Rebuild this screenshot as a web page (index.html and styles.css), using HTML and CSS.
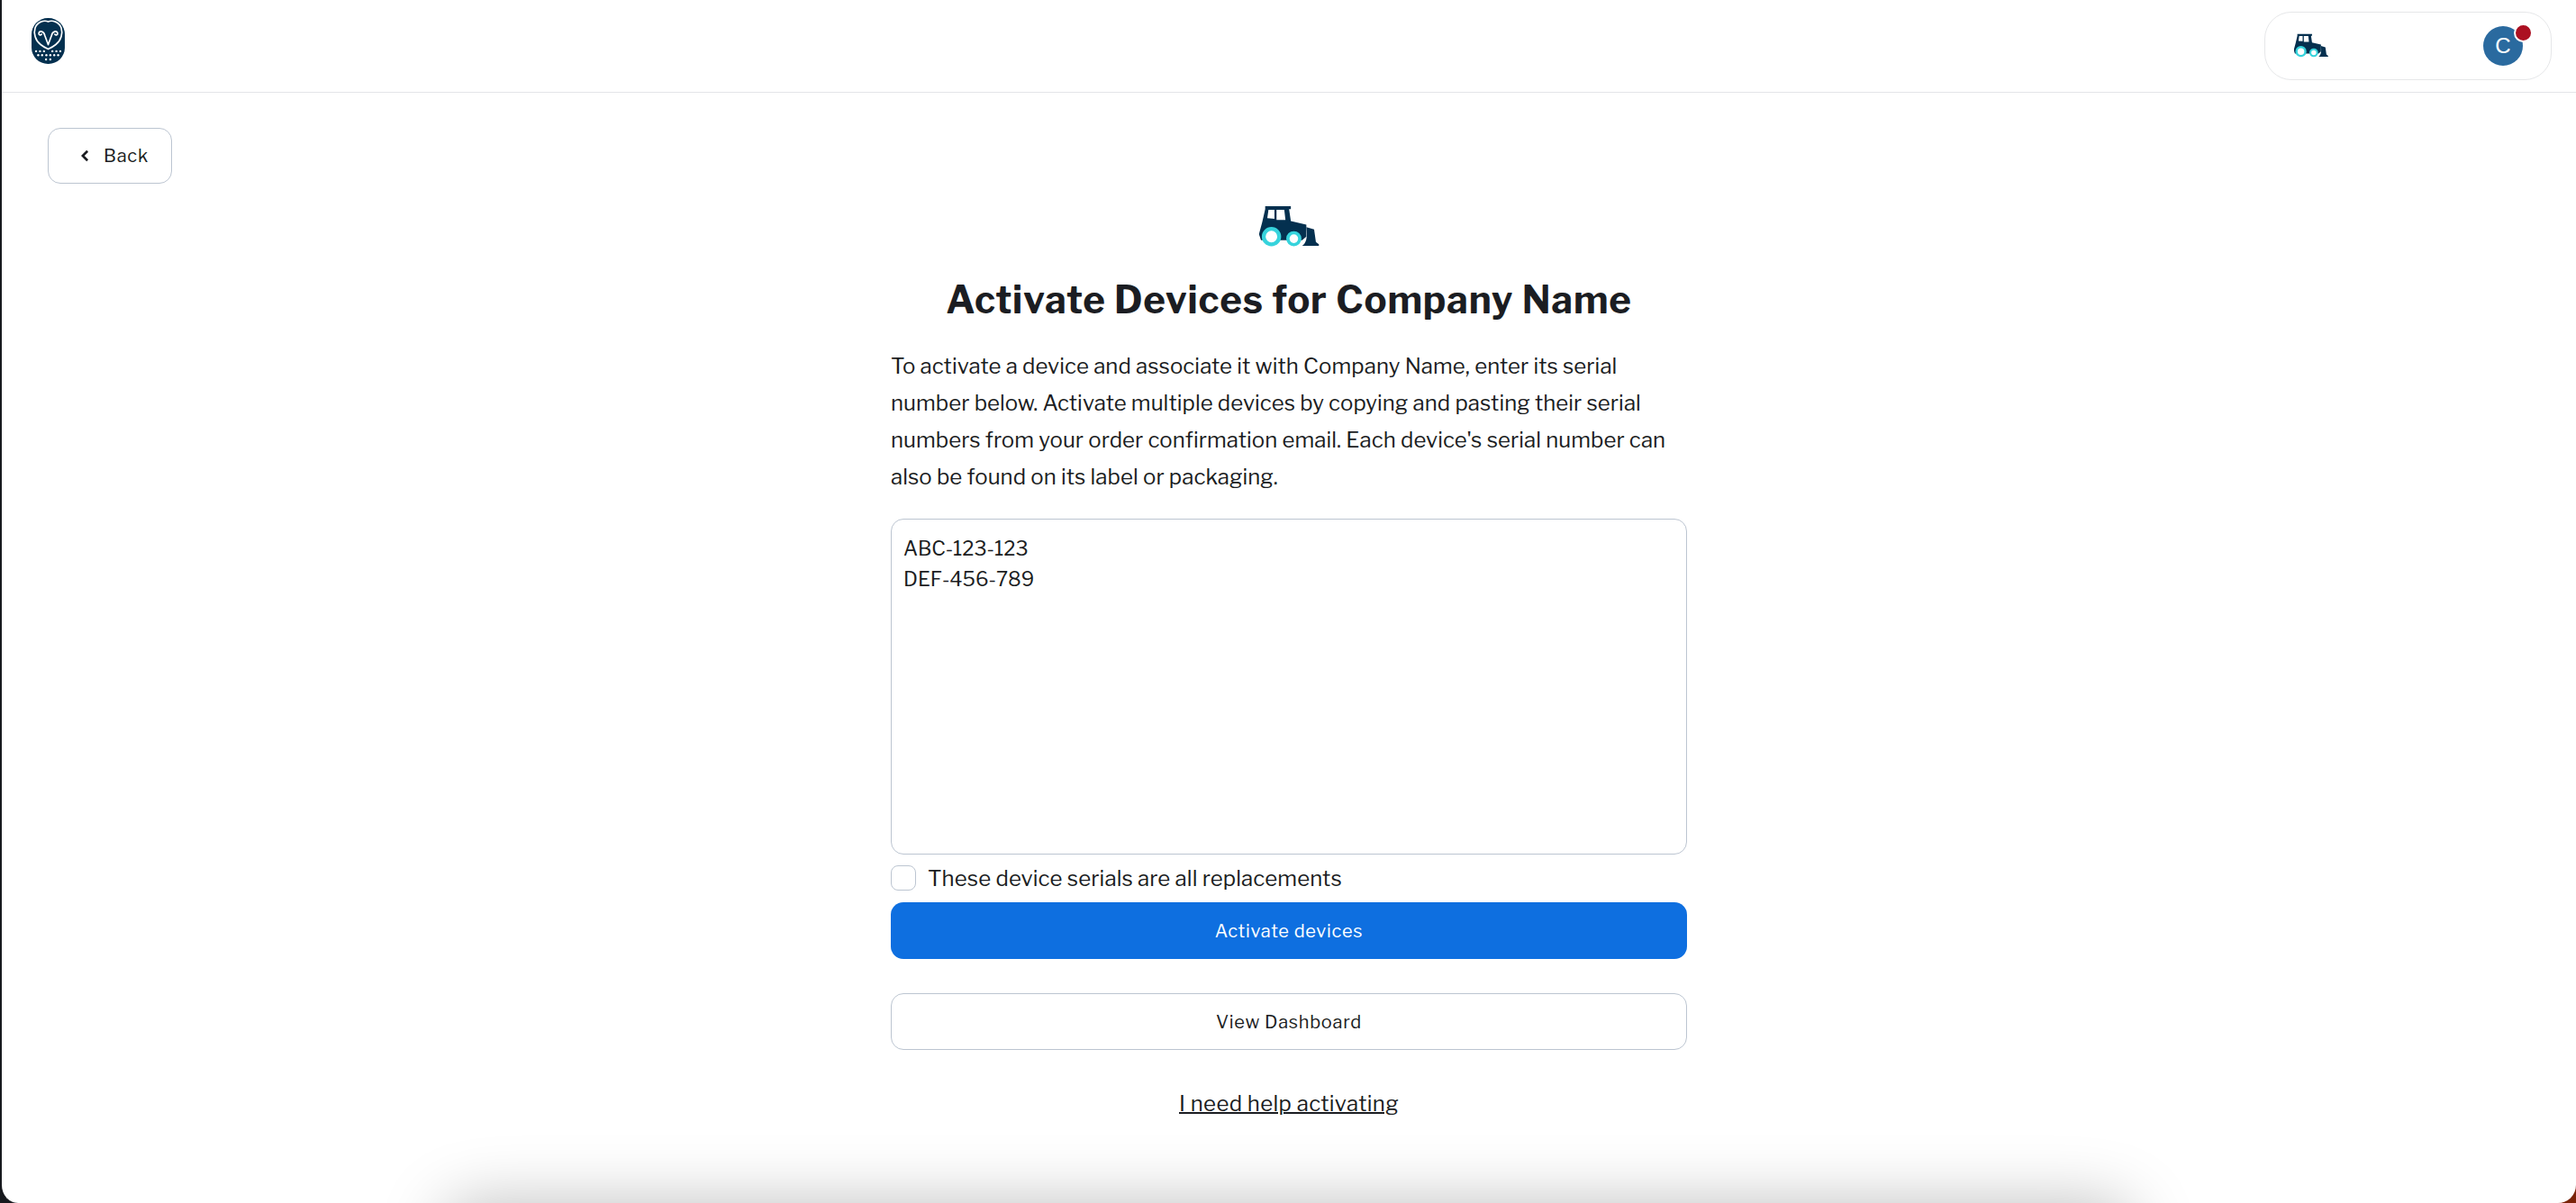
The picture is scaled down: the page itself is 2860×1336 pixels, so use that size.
FILE: index.html
```html
<!DOCTYPE html>
<html lang="en">
<head>
<meta charset="utf-8">
<title>Activate Devices</title>
<link rel="stylesheet" href="styles.css">
</head>
<body>
<div class="window">
  <header class="topbar">
    <svg class="logo" viewBox="0 0 110 152" aria-label="Logo">
      <rect width="110" height="152" rx="54" fill="#04304f"/>
      <path d="M55 12C68 6 90 12 98 32C104 50 98 74 80 88C70 96 62 100 55 103C48 100 40 96 30 88C12 74 6 50 12 32C20 12 42 6 55 12Z" fill="none" stroke="#fff" stroke-width="5"/>
      <path d="M55 88L44 58C41 44 27 40 24 50C23 56 29 58 33 54M55 88L66 58C69 44 83 40 86 50C87 56 81 58 77 54" fill="none" stroke="#fff" stroke-width="5" stroke-linecap="round"/>
      <g fill="#fff">
        <circle cx="15" cy="110" r="3.5"/><circle cx="28" cy="110" r="3.5"/><circle cx="41" cy="110" r="3.5"/><circle cx="69" cy="110" r="3.5"/><circle cx="82" cy="110" r="3.5"/><circle cx="95" cy="110" r="3.5"/>
        <circle cx="22" cy="123" r="3.5"/><circle cx="35" cy="123" r="3.5"/><circle cx="49" cy="123" r="3.5"/><circle cx="62" cy="123" r="3.5"/><circle cx="75" cy="123" r="3.5"/><circle cx="88" cy="123" r="3.5"/>
        <circle cx="48" cy="137" r="3.5"/><circle cx="62" cy="137" r="3.5"/>
      </g>
    </svg>
    <div class="account">
      <svg class="truck truck-small" viewBox="115 55 200 145" aria-hidden="true">
        <use href="#truck"/>
      </svg>
      <div class="avatar">C<span class="badge"></span></div>
    </div>
  </header>

  <main class="content">
    <div class="backrow">
      <button class="btn back"><svg class="chev" viewBox="0 0 10 16"><path d="M8 2L2 8l6 6" fill="none" stroke="#1a1c20" stroke-width="3"/></svg>Back</button>
    </div>
    <section class="panel">
      <svg class="truck truck-large" viewBox="115 55 200 145" aria-hidden="true">
        <g id="truck">
          <path d="M134 58H220V68H214L220 108L272 120V160L258 172H120L113 152L124 112L134 68Z" fill="#04304f"/>
          <path d="M272 128L298 136L304 178L314 186V191H258C272 180 276 165 272 128Z" fill="#04304f"/>
          <path d="M145 70H165V100L141 98ZM172 70H198L202 104H172Z" fill="#fff"/>
          <circle cx="155" cy="160" r="26" fill="#fff" stroke="#36d3dc" stroke-width="13"/>
          <circle cx="230" cy="167" r="20" fill="#fff" stroke="#36d3dc" stroke-width="11"/>
        </g>
      </svg>
      <h1 class="title">Activate Devices for Company Name</h1>
      <p class="intro">To activate a device and associate it with Company Name, enter its serial number below. Activate multiple devices by copying and pasting their serial numbers from your order confirmation email. Each device's serial number can also be found on its label or packaging.</p>
      <textarea class="serials" spellcheck="false">ABC-123-123
DEF-456-789</textarea>
      <label class="check"><span class="box"></span>These device serials are all replacements</label>
      <button class="btn primary">Activate devices</button>
      <button class="btn secondary">View Dashboard</button>
      <a class="help" href="#">I need help activating</a>
    </section>
  </main>
  <div class="floor-shadow"></div>
</div>
</body>
</html>
```
FILE: styles.css
```css
* { box-sizing: border-box; }
html, body { margin: 0; height: 1336px; }
body {
  background: linear-gradient(to right, #17191e 50%, #7a2208 50%);
  overflow: hidden;
  font-family: "Libre Franklin", "Noto Sans", sans-serif;
  color: #1b1d22;
}
.window {
  position: relative;
  height: 1336px;
  background: #fff;
  border-left: 2px solid #17191e;
  border-bottom-left-radius: 20px;
  border-bottom-right-radius: 20px;
  overflow: hidden;
  display: flex;
  flex-direction: column;
}
.topbar {
  height: 103px;
  flex: none;
  border-bottom: 1px solid #e3e5e8;
  display: flex;
  align-items: flex-start;
  justify-content: space-between;
  padding: 13px 27px 0 33px;
}
.logo { width: 37px; height: 51px; margin-top: 7px; }
.account {
  width: 319px;
  height: 76px;
  border: 1px solid #e6e7e9;
  border-radius: 30px;
  display: flex;
  align-items: center;
  justify-content: space-between;
  padding: 0 31px 0 32px;
}
.truck-small { width: 38px; height: 28px; }
.avatar {
  position: relative;
  width: 44px;
  height: 44px;
  border-radius: 50%;
  background: #2a6a9f;
  color: #fff;
  font: 24px/44px "Liberation Sans", sans-serif;
  text-align: center;
}
.badge {
  position: absolute;
  top: -3px;
  right: -11px;
  width: 21px;
  height: 21px;
  border-radius: 50%;
  background: #ac1021;
  border: 2px solid #fff;
}
.content { flex: 1; display: flex; flex-direction: column; }
.backrow { padding: 39px 0 0 51px; height: 123px; flex: none; }
.btn {
  font-family: inherit;
  font-size: 20px;
  border-radius: 14px;
  cursor: pointer;
  letter-spacing: 0.7px;
}
.back {
  width: 138px;
  height: 62px;
  background: #fff;
  border: 1px solid #bcc5d1;
  color: #1b1d22;
  display: flex;
  align-items: center;
  justify-content: flex-start;
  gap: 16px;
  padding: 0 0 0 36px;
}
.chev { width: 9px; height: 14px; }
.panel {
  width: 884px;
  margin-left: 987px;
  display: flex;
  flex-direction: column;
  align-items: center;
}
.truck-large { width: 67px; height: 48px; flex: none; margin-top: 2px; }
.title {
  font-size: 42px;
  line-height: 52px;
  font-weight: 700;
  margin: 31px 0 0;
  white-space: nowrap;
  letter-spacing: 0.8px;
}
.intro {
  width: 100%;
  font-size: 24px;
  line-height: 41px;
  margin: 27px 0 0;
  letter-spacing: 0.05px;
}
.serials {
  display: block;
  width: 100%;
  height: 373px;
  margin-top: 26px;
  border: 1px solid #bcc5d1;
  border-radius: 14px;
  padding: 15px 13px;
  font: 22px/34px "Libre Franklin", "Noto Sans", sans-serif;
  color: #1b1d22;
  resize: none;
  outline: none;
}
.check {
  width: 100%;
  display: flex;
  align-items: center;
  gap: 13px;
  font-size: 24px;
  letter-spacing: 0.1px;
  height: 28px;
  margin-top: 12px;
}
.box {
  width: 28px;
  height: 28px;
  border: 1px solid #bcc5d1;
  border-radius: 8px;
  flex: none;
}
.primary {
  width: 100%;
  height: 63px;
  margin-top: 13px;
  background: #0e6fe0;
  border: 0;
  color: #fff;
}
.secondary {
  width: 100%;
  height: 63px;
  margin-top: 38px;
  background: #fff;
  border: 1px solid #bcc5d1;
  color: #1b1d22;
}
.help {
  margin-top: 44px;
  font-size: 24px;
  line-height: 32px;
  letter-spacing: 0.33px;
  color: #1b1d22;
  text-decoration: underline;
  text-decoration-thickness: 2px;
}
.floor-shadow {
  position: absolute;
  left: 498px;
  right: 500px;
  bottom: -69px;
  height: 60px;
  border-radius: 30px;
  box-shadow: 0 0 70px 10px rgba(0, 0, 0, 0.25);
}
```
